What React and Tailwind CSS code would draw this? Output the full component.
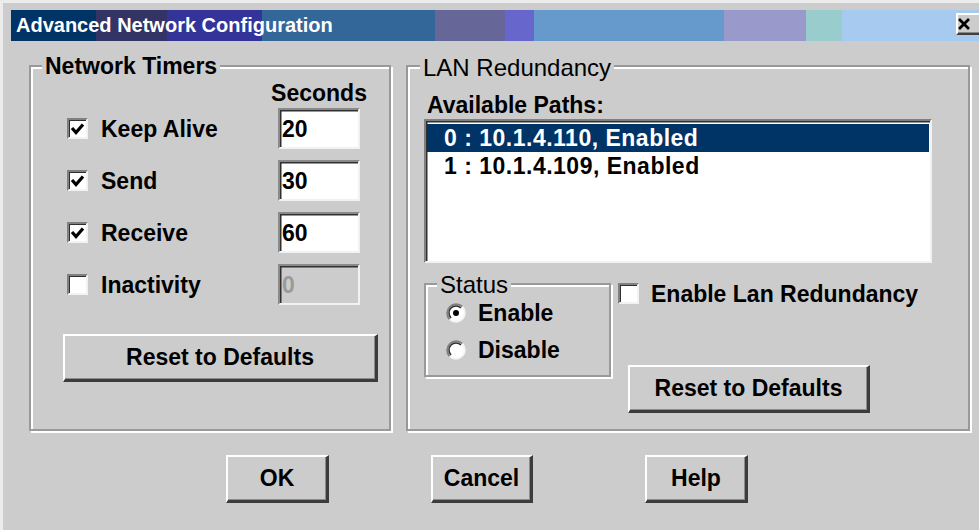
import React from "react";

// colour bands of the dithered caption gradient, left to right
const bands = [
  "w-[85px] bg-[#003366]",
  "w-[71px] bg-[#333366]",
  "w-[95px] bg-[#333399]",
  "w-[173px] bg-[#336699]",
  "w-[70px] bg-[#666699]",
  "w-[29px] bg-[#6666cc]",
  "w-[190px] bg-[#6699cc]",
  "w-[82px] bg-[#9999cc]",
  "w-[36px] bg-[#99cccc]",
  "flex-1 bg-[#a6caf0]",
];

function TitleBar() {
  return (
    <div className="relative ml-[8px] mt-[7px] flex h-[31px] w-[971px] items-start">
      <div className="absolute inset-0 flex">
        {bands.map((b) => (
          <div key={b} className={`h-full ${b}`} />
        ))}
      </div>
      <span className="relative ml-[5px] mt-[4px] text-[20px] font-bold leading-[23px] text-white">
        Advanced Network Configuration
      </span>
      <button className="relative ml-auto mt-[3px] flex h-[22px] w-[26px] items-center border-t-2 border-l-2 border-r-2 border-b-2 border-t-white border-l-white border-r-[#404040] border-b-[#404040] bg-[#cccccc] shadow-[inset_-1px_-1px_0_#888888]">
        <svg width="12" height="12" viewBox="0 0 12 12">
          <path d="M1 1 L11 11 M11 1 L1 11" stroke="#000" strokeWidth="2.8" />
        </svg>
      </button>
    </div>
  );
}

function Group({ className, label, labelClass, children }) {
  return (
    <div
      className={`relative border-2 border-[#999999] shadow-[inset_2px_2px_0_#ffffff,2px_2px_0_#ffffff] ${className}`}
    >
      <span className={`absolute bg-[#cccccc] px-[3px] ${labelClass}`}>{label}</span>
      {children}
    </div>
  );
}

function CheckBox({ checked }) {
  return (
    <span className="flex h-[21px] w-[21px] shrink-0 border-2 border-t-[#808080] border-l-[#808080] border-r-[#f2f2f2] border-b-[#f2f2f2] bg-white shadow-[inset_1px_1px_0_#303030]">
      {checked && (
        <svg width="17" height="17" viewBox="0 0 17 17" className="shrink-0">
          <path d="M3 8 L7 12.5 L14 4.5" fill="none" stroke="#000" strokeWidth="3.2" />
        </svg>
      )}
    </span>
  );
}

function Radio({ checked }) {
  return (
    <svg width="20" height="20" viewBox="0 0 20 20" className="shrink-0">
      <circle cx="10" cy="10" r="9" fill="#ffffff" />
      <path d="M3.64 16.36 A9 9 0 0 1 16.36 3.64" fill="none" stroke="#808080" strokeWidth="2" />
      <path d="M5.05 14.95 A7 7 0 0 1 14.95 5.05" fill="none" stroke="#303030" strokeWidth="1.5" />
      <path d="M16.36 3.64 A9 9 0 0 1 3.64 16.36" fill="none" stroke="#f4f4f4" strokeWidth="2" />
      {checked && <circle cx="10" cy="10" r="3" fill="#000" />}
    </svg>
  );
}

function Field({ value, disabled }) {
  return (
    <div
      className={`flex h-[41px] w-[82px] items-center border-2 border-t-[#8a8a8a] border-l-[#8a8a8a] border-r-[#f2f2f2] border-b-[#f2f2f2] pl-[2px] shadow-[inset_1.5px_1.5px_0_#303030] ${
        disabled ? "bg-[#cccccc] text-[#9a9a9a]" : "bg-white text-black"
      }`}
    >
      {value}
    </div>
  );
}

function Btn({ className, children }) {
  return (
    <button
      className={`flex items-center justify-center border-t-2 border-l-2 border-r-[3px] border-b-[3px] border-t-white border-l-white border-r-[#3c3c3c] border-b-[#3c3c3c] bg-[#cccccc] pb-[2px] text-[23px] font-bold leading-[26px] shadow-[inset_-1px_-1px_0_#8c8c8c] ${className}`}
    >
      {children}
    </button>
  );
}

const timers = [
  { name: "Keep Alive", on: true, value: "20" },
  { name: "Send", on: true, value: "30" },
  { name: "Receive", on: true, value: "60" },
  { name: "Inactivity", on: false, value: "0" },
];

const paths = ["0 : 10.1.4.110, Enabled", "1 : 10.1.4.109, Enabled"];

export default function App() {
  return (
    <div className="h-[530px] w-[979px] overflow-hidden border-t-[3px] border-l-[3px] border-t-[#ececec] border-l-[#ececec] bg-[#cccccc] font-['Liberation_Sans',Arial,sans-serif] text-black">
      <TitleBar />

      <div className="ml-[26px] mt-[24px] flex items-start">
        <Group
          className="h-[366px] w-[362px]"
          label="Network Timers"
          labelClass="-top-[14px] left-[11px] text-[23px] font-bold leading-[26px]"
        >
          <div className="ml-[247px] mt-[13px] flex w-[82px] justify-center whitespace-nowrap text-[23px] font-bold leading-[26px]">
            Seconds
          </div>
          <div className="mt-[2px] flex flex-col gap-[11px]">
            {timers.map((t) => (
              <div key={t.name} className="flex h-[41px] items-center pl-[36px] text-[23px] font-bold leading-[26px]">
                <CheckBox checked={t.on} />
                <span className="ml-[13px] w-[177px]">{t.name}</span>
                <Field value={t.value} disabled={!t.on} />
              </div>
            ))}
          </div>
          <Btn className="ml-[32px] mt-[29px] h-[48px] w-[315px]">Reset to Defaults</Btn>
        </Group>

        <Group
          className="ml-[15px] h-[366px] w-[564px]"
          label="LAN Redundancy"
          labelClass="-top-[13px] left-[12px] text-[24px] leading-[27px]"
        >
          <div className="ml-[19px] mt-[25px] text-[23px] font-bold leading-[26px]">Available Paths:</div>
          <div className="ml-[16px] mt-[1px] h-[144px] w-[508px] border-2 border-t-[#808080] border-l-[#808080] border-r-[#f2f2f2] border-b-[#f2f2f2] bg-white pt-[3px] shadow-[inset_1.5px_1.5px_0_#303030]">
            {paths.map((p, i) => (
              <div
                key={p}
                className={`mx-[1px] h-[28px] pl-[17px] text-[23px] font-bold leading-[28px] tracking-[0.5px] ${
                  i === 0 ? "bg-[#003366] text-white" : "text-black"
                }`}
              >
                {p}
              </div>
            ))}
          </div>

          <div className="mt-[20px] flex items-start">
            <Group
              className="ml-[16px] h-[94px] w-[187px]"
              label="Status"
              labelClass="-top-[14px] left-[11px] text-[24px] leading-[27px]"
            >
              <div className="flex flex-col gap-[11px] pl-[20px] pt-[15px] text-[23px] font-bold leading-[26px]">
                <label className="flex h-[26px] items-center gap-[12px]">
                  <Radio checked />
                  Enable
                </label>
                <label className="flex h-[26px] items-center gap-[12px]">
                  <Radio />
                  Disable
                </label>
              </div>
            </Group>

            <div className="ml-[7px] flex flex-col">
              <label className="flex h-[21px] items-center gap-[12px] whitespace-nowrap text-[23px] font-bold leading-[26px]">
                <CheckBox />
                Enable Lan Redundancy
              </label>
              <Btn className="ml-[10px] mt-[61px] h-[48px] w-[242px]">Reset to Defaults</Btn>
            </div>
          </div>
        </Group>
      </div>

      <div className="ml-[223px] mt-[24px] flex">
        <Btn className="h-[48px] w-[103px]">OK</Btn>
        <Btn className="ml-[102px] h-[48px] w-[102px]">Cancel</Btn>
        <Btn className="ml-[112px] h-[48px] w-[103px]">Help</Btn>
      </div>
    </div>
  );
}
